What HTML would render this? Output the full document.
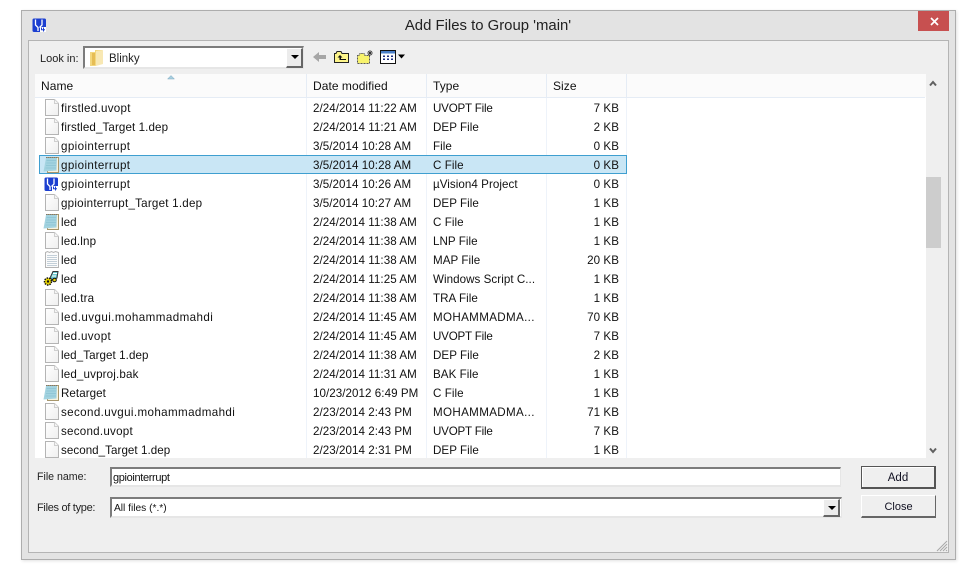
<!DOCTYPE html>
<html><head><meta charset="utf-8"><style>
html,body{margin:0;padding:0;background:#fff;width:975px;height:570px;overflow:hidden}
*{box-sizing:border-box}
body{font-family:"Liberation Sans",sans-serif;color:#111;position:relative}
.a{position:absolute}
.t{position:absolute;font-size:11.6px;line-height:19px;height:19px;white-space:nowrap;letter-spacing:.05px}
.lab{position:absolute;font-size:11px;line-height:14px;white-space:nowrap;color:#222}
.sz{text-align:right;width:60px;left:559px}
.sep{position:absolute;width:1px;background:#eef3fa}
.hsep{position:absolute;width:1px;background:#e5ecf5;top:74px;height:23px}
.sunk{position:absolute;background:#fff;border:1px solid #f8f8f8;border-top:2px solid #7c7c7c;border-left:2px solid #7c7c7c;border-right-color:#e6e6e6;border-bottom:2px solid #e6e6e6}
.cb{position:absolute;background:#ececec;border:1px solid #fff;border-right:2px solid #666;border-bottom:2px solid #666}
.cb:after{content:"";position:absolute;left:4px;top:6px;border-left:4px solid transparent;border-right:4px solid transparent;border-top:4px solid #000}
.btn{position:absolute;left:861px;width:75px;background:#efefef;font-size:11.5px;text-align:center;color:#112}
svg{position:absolute;overflow:visible}
svg.d{left:45px;width:14px;height:17px}
svg.c{left:43px;width:17px;height:18px}
</style></head><body>
<svg width="0" height="0" style="left:0;top:0"><defs>
<linearGradient id="dg" x1="0" y1="0" x2="1" y2="1"><stop offset="0" stop-color="#fff"/><stop offset="1" stop-color="#efefef"/></linearGradient>
<g id="doc"><path d="M.5 .5H9.500L13.500 4.500V16.500H.5Z" fill="url(#dg)" stroke="#b4b4b4"/><path d="M9.500 .5V4.500H13.500" fill="#f4f4f4" stroke="#cfcfcf"/></g>
<g id="cf"><path d="M4.500 1.500H15.500V16.500H4.500Z" fill="#f8f3df" stroke="#a8976c"/><path d="M3 2H14L13.500 14.500L.5 15.500Z" fill="#a3d3e0"/><path d="M3.500 4.500H13M3.500 7H13M3 9.500H13M2.500 12H13" stroke="#8cc3d2" stroke-width=".8"/><path d="M3 1.500H14" stroke="#777" stroke-dasharray="1 1"/></g>
<g id="uv"><rect x=".5" y=".5" width="13.500" height="13.500" rx="1.500" fill="#1c3fd0"/><path d="M3.500 1.500V7L6 9.500V13M10 1.500V7L7.500 9.500" fill="none" stroke="#fff" stroke-width="1.300"/><path d="M8 9H14V14H8Z" fill="#fff"/><path d="M11.500 9.500V13.500M9.500 9.500V11.800H13" stroke="#1c3fd0" fill="none"/></g>
</defs></svg>

<!-- window -->
<div class="a" style="left:21px;top:10px;width:935px;height:550px;background:#e3e3e3;border:1px solid #adadad;box-shadow:1px 1px 3px rgba(0,0,0,.12)"></div>
<div class="a" style="left:28px;top:40px;width:921px;height:513px;background:#efefef;border:1px solid #b4b4b4"></div>
<div class="a" style="left:918px;top:11px;width:31px;height:20px;background:#c75050"></div>
<svg style="left:930px;top:17px" width="9" height="9"><path d="M1 1L8 8M8 1L1 8" stroke="#fff" stroke-width="1.700"/></svg>
<svg style="left:32px;top:18px" width="15" height="15"><use href="#uv"/></svg>
<div class="a" style="left:0;width:975px;top:18px;text-align:center;font-size:14.900px;line-height:16px;color:#222;padding-left:1px">Add Files to Group 'main'</div>

<!-- look in -->
<div class="lab" style="left:40px;top:52px">Look in:</div>
<div class="sunk" style="left:83px;top:46px;width:221px;height:23px"></div>
<div class="cb" style="left:286px;top:48px;width:17px;height:20px"></div>
<svg style="left:90px;top:49px" width="14" height="18"><path d="M0 3H5V1H12V15L5 17H0Z" fill="#f3d77e"/><path d="M6 2L13 1V15L6 17Z" fill="#f8e8b4"/><path d="M2 4H5V16H2Z" fill="#e6bd55"/></svg>
<div class="lab" style="left:109px;top:52px;font-size:11.500px">Blinky</div>

<svg style="left:312px;top:50px" width="15" height="14"><path d="M1 7L7 2V5H14V9H7V12Z" fill="#a6a6a6"/></svg>
<svg style="left:334px;top:50px" width="16" height="14"><path d="M.5 3.500H2L3 1.500H7L8 3.500H14.500V12.500H.5Z" fill="#fdf58b" stroke="#222"/><path d="M6 5L3.500 7.500H5.500V10H12V9H7V7.500H8.500Z" fill="#111"/></svg>
<svg style="left:357px;top:49px" width="17" height="16"><path d="M.5 6.500H2L3 4.500H7L8 6.500H12.500V14.500H.5Z" fill="#f8f36c" stroke="#555" stroke-dasharray="1 .5"/><path d="M13 1V7M10 4H16M11 2L15 6M15 2L11 6" stroke="#333" stroke-width=".8"/></svg>
<svg style="left:380px;top:50px" width="26" height="15"><rect x=".5" y=".5" width="15" height="13" fill="#fff" stroke="#111"/><rect x="1" y="1" width="14" height="2.500" fill="#4a7fc8"/><path d="M3 5.500h2v1.500h-2zM7 5.500h2v1.500h-2zM11 5.500h2v1.500h-2zM3 8.500h2v1.500h-2zM7 8.500h2v1.500h-2zM11 8.500h2v1.500h-2z" fill="#1d2e80"/><path d="M18 4.500H25L21.500 8.500Z" fill="#000"/></svg>

<!-- list -->
<div class="a" style="left:35px;top:74px;width:891px;height:384px;background:#fff"></div>
<div class="a" style="left:35px;top:74px;width:891px;height:23px;background:#fbfbfb"></div>
<div class="a" style="left:35px;top:97px;width:890px;height:1px;background:#e5ecf5"></div>
<div class="hsep" style="left:306px"></div><div class="hsep" style="left:426px"></div><div class="hsep" style="left:546px"></div><div class="hsep" style="left:626px"></div>
<div class="sep" style="left:306px;top:98px;height:360px"></div><div class="sep" style="left:426px;top:98px;height:360px"></div><div class="sep" style="left:546px;top:98px;height:360px"></div><div class="sep" style="left:626px;top:98px;height:360px"></div>
<svg style="left:167px;top:75px" width="8" height="5"><path d="M.5 4L4 .5L7.500 4Z" fill="#a9cfe0" stroke="#7fa9c0" stroke-width=".5"/></svg>
<div class="t" style="left:41px;top:77px;font-size:12px">Name</div>
<div class="t" style="left:313px;top:77px;font-size:12px">Date modified</div>
<div class="t" style="left:433px;top:77px;font-size:12px">Type</div>
<div class="t" style="left:553px;top:77px;font-size:12px">Size</div>

<div class="a" style="left:39px;top:155px;width:588px;height:19px;background:#c9e6f5;border:1px solid #3f9fd0"></div>

<svg class="d" style="top:99px"><use href="#doc"/></svg>
<div class="t" style="left:61px;top:99px;letter-spacing:.29px">firstled.uvopt</div><div class="t" style="left:313px;top:99px">2/24/2014 11:22 AM</div><div class="t" style="left:433px;top:99px;letter-spacing:-.2px">UVOPT File</div><div class="t sz" style="top:99px">7 KB</div>
<svg class="d" style="top:118px"><use href="#doc"/></svg>
<div class="t" style="left:61px;top:118px;letter-spacing:.1px">firstled_Target 1.dep</div><div class="t" style="left:313px;top:118px">2/24/2014 11:21 AM</div><div class="t" style="left:433px;top:118px">DEP File</div><div class="t sz" style="top:118px">2 KB</div>
<svg class="d" style="top:137px"><use href="#doc"/></svg>
<div class="t" style="left:61px;top:137px;letter-spacing:.38px">gpiointerrupt</div><div class="t" style="left:313px;top:137px">3/5/2014 10:28 AM</div><div class="t" style="left:433px;top:137px">File</div><div class="t sz" style="top:137px">0 KB</div>
<svg class="c" style="top:156px"><use href="#cf"/></svg>
<div class="t" style="left:61px;top:156px;letter-spacing:.38px">gpiointerrupt</div><div class="t" style="left:313px;top:156px">3/5/2014 10:28 AM</div><div class="t" style="left:433px;top:156px">C File</div><div class="t sz" style="top:156px">0 KB</div>
<svg style="left:44px;top:177px" width="15" height="15"><use href="#uv"/></svg>
<div class="t" style="left:61px;top:175px;letter-spacing:.38px">gpiointerrupt</div><div class="t" style="left:313px;top:175px">3/5/2014 10:26 AM</div><div class="t" style="left:433px;top:175px">µVision4 Project</div><div class="t sz" style="top:175px">0 KB</div>
<svg class="d" style="top:194px"><use href="#doc"/></svg>
<div class="t" style="left:61px;top:194px;letter-spacing:.23px">gpiointerrupt_Target 1.dep</div><div class="t" style="left:313px;top:194px">3/5/2014 10:27 AM</div><div class="t" style="left:433px;top:194px">DEP File</div><div class="t sz" style="top:194px">1 KB</div>
<svg class="c" style="top:213px"><use href="#cf"/></svg>
<div class="t" style="left:61px;top:213px">led</div><div class="t" style="left:313px;top:213px">2/24/2014 11:38 AM</div><div class="t" style="left:433px;top:213px">C File</div><div class="t sz" style="top:213px">1 KB</div>
<svg class="d" style="top:232px"><use href="#doc"/></svg>
<div class="t" style="left:61px;top:232px;letter-spacing:.15px">led.lnp</div><div class="t" style="left:313px;top:232px">2/24/2014 11:38 AM</div><div class="t" style="left:433px;top:232px">LNP File</div><div class="t sz" style="top:232px">1 KB</div>
<svg class="d" style="top:251px"><path d="M.5 1.500L2.500 .5L4.500 1.500L6.500 .5L8.500 1.500L10.500 .5L13.500 1.500V16.500H.5Z" fill="#fbfbfb" stroke="#b4b4b4"/><path d="M2 4.500H12M2 6.500H12M2 8.500H12M2 10.500H12M2 12.500H12M2 14.500H12" stroke="#c3cfd8"/></svg>
<div class="t" style="left:61px;top:251px">led</div><div class="t" style="left:313px;top:251px">2/24/2014 11:38 AM</div><div class="t" style="left:433px;top:251px">MAP File</div><div class="t sz" style="top:251px">20 KB</div>
<svg style="left:43px;top:270px" width="17" height="17"><path d="M7 8L10 1.500H15L14 8L10 10Z" fill="#6cc9d0" stroke="#333"/><path d="M10 3.500H14M9 6H13" stroke="#fff"/><circle cx="5" cy="11.500" r="3.500" fill="#e8d400" stroke="#111" stroke-width="1.500" stroke-dasharray="1.500 1"/><circle cx="5" cy="11.500" r="1.200" fill="#111"/><circle cx="11.500" cy="10" r="1.800" fill="#e8d400" stroke="#111"/></svg>
<div class="t" style="left:61px;top:270px">led</div><div class="t" style="left:313px;top:270px">2/24/2014 11:25 AM</div><div class="t" style="left:433px;top:270px">Windows Script C...</div><div class="t sz" style="top:270px">1 KB</div>
<svg class="d" style="top:289px"><use href="#doc"/></svg>
<div class="t" style="left:61px;top:289px;letter-spacing:.15px">led.tra</div><div class="t" style="left:313px;top:289px">2/24/2014 11:38 AM</div><div class="t" style="left:433px;top:289px">TRA File</div><div class="t sz" style="top:289px">1 KB</div>
<svg class="d" style="top:308px"><use href="#doc"/></svg>
<div class="t" style="left:61px;top:308px;letter-spacing:.43px">led.uvgui.mohammadmahdi</div><div class="t" style="left:313px;top:308px">2/24/2014 11:45 AM</div><div class="t" style="left:433px;top:308px;letter-spacing:.35px">MOHAMMADMA...</div><div class="t sz" style="top:308px">70 KB</div>
<svg class="d" style="top:327px"><use href="#doc"/></svg>
<div class="t" style="left:61px;top:327px;letter-spacing:.33px">led.uvopt</div><div class="t" style="left:313px;top:327px">2/24/2014 11:45 AM</div><div class="t" style="left:433px;top:327px;letter-spacing:-.2px">UVOPT File</div><div class="t sz" style="top:327px">7 KB</div>
<svg class="d" style="top:346px"><use href="#doc"/></svg>
<div class="t" style="left:61px;top:346px;letter-spacing:.07px">led_Target 1.dep</div><div class="t" style="left:313px;top:346px">2/24/2014 11:38 AM</div><div class="t" style="left:433px;top:346px">DEP File</div><div class="t sz" style="top:346px">2 KB</div>
<svg class="d" style="top:365px"><use href="#doc"/></svg>
<div class="t" style="left:61px;top:365px;letter-spacing:.15px">led_uvproj.bak</div><div class="t" style="left:313px;top:365px">2/24/2014 11:31 AM</div><div class="t" style="left:433px;top:365px">BAK File</div><div class="t sz" style="top:365px">1 KB</div>
<svg class="c" style="top:384px"><use href="#cf"/></svg>
<div class="t" style="left:61px;top:384px">Retarget</div><div class="t" style="left:313px;top:384px">10/23/2012 6:49 PM</div><div class="t" style="left:433px;top:384px">C File</div><div class="t sz" style="top:384px">1 KB</div>
<svg class="d" style="top:403px"><use href="#doc"/></svg>
<div class="t" style="left:61px;top:403px;letter-spacing:.38px">second.uvgui.mohammadmahdi</div><div class="t" style="left:313px;top:403px">2/23/2014 2:43 PM</div><div class="t" style="left:433px;top:403px;letter-spacing:.35px">MOHAMMADMA...</div><div class="t sz" style="top:403px">71 KB</div>
<svg class="d" style="top:422px"><use href="#doc"/></svg>
<div class="t" style="left:61px;top:422px;letter-spacing:.25px">second.uvopt</div><div class="t" style="left:313px;top:422px">2/23/2014 2:43 PM</div><div class="t" style="left:433px;top:422px;letter-spacing:-.2px">UVOPT File</div><div class="t sz" style="top:422px">7 KB</div>
<svg class="d" style="top:441px"><use href="#doc"/></svg>
<div class="t" style="left:61px;top:441px;letter-spacing:.05px">second_Target 1.dep</div><div class="t" style="left:313px;top:441px">2/23/2014 2:31 PM</div><div class="t" style="left:433px;top:441px">DEP File</div><div class="t sz" style="top:441px">1 KB</div>

<!-- scrollbar -->
<div class="a" style="left:926px;top:177px;width:15px;height:71px;background:#cdcdcd"></div>
<svg style="left:929px;top:80px" width="9" height="7"><path d="M1 5.500L4 2L7 5.500" fill="none" stroke="#606060" stroke-width="2"/></svg>
<svg style="left:929px;top:447px" width="9" height="7"><path d="M1 1.500L4 5L7 1.500" fill="none" stroke="#606060" stroke-width="2"/></svg>

<!-- bottom -->
<div class="lab" style="left:37px;top:470px;font-size:10.600px">File name:</div>
<div class="sunk" style="left:110px;top:467px;width:731px;height:20px"></div>
<div class="lab" style="left:113px;top:471px;font-size:11px;letter-spacing:-.35px;color:#111">gpiointerrupt</div>
<div class="lab" style="left:37px;top:501px;letter-spacing:-.3px">Files of type:</div>
<div class="sunk" style="left:110px;top:497px;width:732px;height:21px"></div>
<div class="cb" style="left:823px;top:499px;width:17px;height:18px"></div>
<div class="lab" style="left:114px;top:502px;font-size:10.200px;color:#111">All files (*.*)</div>

<div class="btn" style="top:466px;height:23px;line-height:22px;border:1px solid #555;border-right:2px solid #555;border-bottom:2px solid #555;box-shadow:inset 1px 1px 0 #fff">Add</div>
<div class="btn" style="top:495px;height:23px;line-height:22px;font-size:11px;border:1px solid #fff;border-right:1px solid #666;border-bottom:2px solid #666">Close</div>

<svg style="left:936px;top:540px" width="12" height="12"><path d="M11 1L1 11M11 4L4 11M11 7L7 11M11 10L10 11" stroke="#a8a8a8" fill="none"/></svg>
</body></html>
